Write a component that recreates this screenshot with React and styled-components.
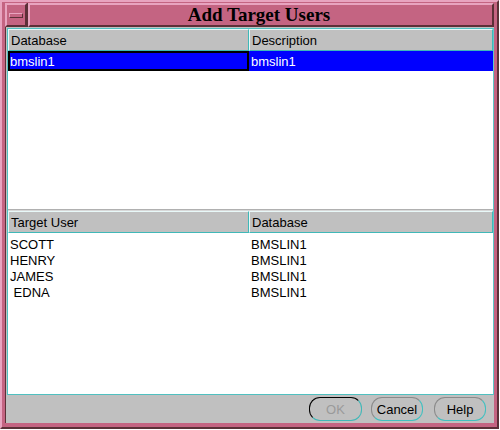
import React from 'react'
import styled, { createGlobalStyle } from 'styled-components'

const Global = createGlobalStyle`
  html, body {
    margin: 0;
    padding: 0;
    background: #ffffff;
  }
`

const Frame = styled.div`
  box-sizing: border-box;
  width: 499px;
  height: 429px;
  background: #c46482;
  border: 2px solid;
  border-color: #e8a4c0 #5c3038 #5c3038 #e8a4c0;
  padding: 1px 3px 4px 3px;
  display: flex;
  flex-direction: column;
`

const TitleRow = styled.div`
  display: flex;
  height: 24px;
  gap: 1px;
  background: #5c3038;
`

const Bevel = styled.div`
  box-sizing: border-box;
  background: #c46482;
  border: 2px solid;
  border-color: #e8a4c0 #5c3038 #5c3038 #e8a4c0;
`

const MenuButton = styled(Bevel)`
  width: 22px;
  display: flex;
  align-items: center;
  justify-content: center;
`

const MenuBar = styled.div`
  box-sizing: border-box;
  width: 14px;
  height: 5px;
  border: 1px solid;
  border-color: #e8a4c0 #5c3038 #5c3038 #e8a4c0;
`

const TitleBar = styled(Bevel)`
  flex: 1;
  display: flex;
  align-items: center;
  justify-content: center;
  font-family: "Liberation Serif", "DejaVu Serif", serif;
  font-weight: bold;
  font-size: 19px;
  color: #000;
  padding-right: 4px;
`

const Body = styled.div`
  flex: 1;
  display: flex;
  flex-direction: column;
  background: #c0c0c0;
  border-left: 1px solid #5c3038;
  padding: 1px 0 0 1px;
`

const Panel = styled.div`
  flex: 1;
  display: flex;
  flex-direction: column;
  border: 1px solid #50c0c0;
  border-right-color: #60c8c8;
  background: #ffffff;
`

const Section = styled.div`
  display: flex;
  flex-direction: column;
  flex: ${p => (p.$fixed ? `0 0 ${p.$fixed}px` : 1)};
  min-height: 0;
  background: #ffffff;
`

const Divider = styled.div`
  height: 1px;
  background: #d8d8d8;
  border-top: 1px solid #b0b0b0;
`

const HeaderRow = styled.div`
  display: grid;
  grid-template-columns: 241px 1fr;
  height: 22px;
  font-family: "Liberation Sans", Arial, sans-serif;
  font-size: 13px;
  color: #000;
`

const HeaderCell = styled.div`
  box-sizing: border-box;
  background: #c0c0c0;
  display: flex;
  align-items: center;
  padding-left: 2px;
  border: 1px solid;
  border-color: #e8f8f8 #40b8b8 #40b8b8 #e8f8f8;
`

const Row = styled.div`
  display: grid;
  grid-template-columns: 241px 1fr;
  height: ${p => p.$h}px;
  font-family: "Liberation Sans", Arial, sans-serif;
  font-size: 13px;
  background: ${p => (p.$selected ? '#0000ff' : '#ffffff')};
  color: ${p => (p.$selected ? '#ffffff' : '#000000')};
`

const Cell = styled.div`
  box-sizing: border-box;
  display: flex;
  align-items: center;
  padding-left: ${p => (p.$focus ? 0 : 2)}px;
  border: ${p => (p.$focus ? '2px solid #000' : 'none')};
  white-space: pre;
`

const Spacer = styled.div`
  height: 3px;
`

const ButtonBar = styled.div`
  height: 28px;
  display: flex;
  align-items: center;
  justify-content: flex-end;
  gap: 9px;
  padding-right: 8px;
`

const Button = styled.button`
  box-sizing: border-box;
  height: 24px;
  width: ${p => p.$w}px;
  border-radius: 11px;
  background: #c0c0c0;
  border: 1px solid;
  border-color: ${p =>
    p.$default ? '#000 #40b8b8 #40b8b8 #000' : '#8a8a8a #40c0c0 #40c0c0 #8a8a8a'};
  font-family: "Liberation Sans", Arial, sans-serif;
  font-size: 13px;
  color: ${p => (p.$disabled ? '#9a9a9a' : '#000')};
  padding: 0;
  cursor: pointer;
  & + & + & {
    margin-left: 2px;
  }
`

const targets = [
  ['SCOTT', 'BMSLIN1'],
  ['HENRY', 'BMSLIN1'],
  ['JAMES', 'BMSLIN1'],
  [' EDNA', 'BMSLIN1'],
]

export default function App() {
  return (
    <>
      <Global />
      <Frame>
        <TitleRow>
          <MenuButton>
            <MenuBar />
          </MenuButton>
          <TitleBar>Add Target Users</TitleBar>
        </TitleRow>
        <Body>
          <Panel>
            <Section $fixed={180}>
              <HeaderRow>
                <HeaderCell>Database</HeaderCell>
                <HeaderCell>Description</HeaderCell>
              </HeaderRow>
              <Row $selected $h={20}>
                <Cell $focus>bmslin1</Cell>
                <Cell>bmslin1</Cell>
              </Row>
            </Section>
            <Divider />
            <Section>
              <HeaderRow>
                <HeaderCell>Target User</HeaderCell>
                <HeaderCell>Database</HeaderCell>
              </HeaderRow>
              <Spacer />
              {targets.map(([u, d]) => (
                <Row key={u} $h={16}>
                  <Cell>{u}</Cell>
                  <Cell>{d}</Cell>
                </Row>
              ))}
            </Section>
          </Panel>
          <ButtonBar>
            <Button $w={53} $default $disabled>OK</Button>
            <Button $w={52}>Cancel</Button>
            <Button $w={52}>Help</Button>
          </ButtonBar>
        </Body>
      </Frame>
    </>
  )
}
